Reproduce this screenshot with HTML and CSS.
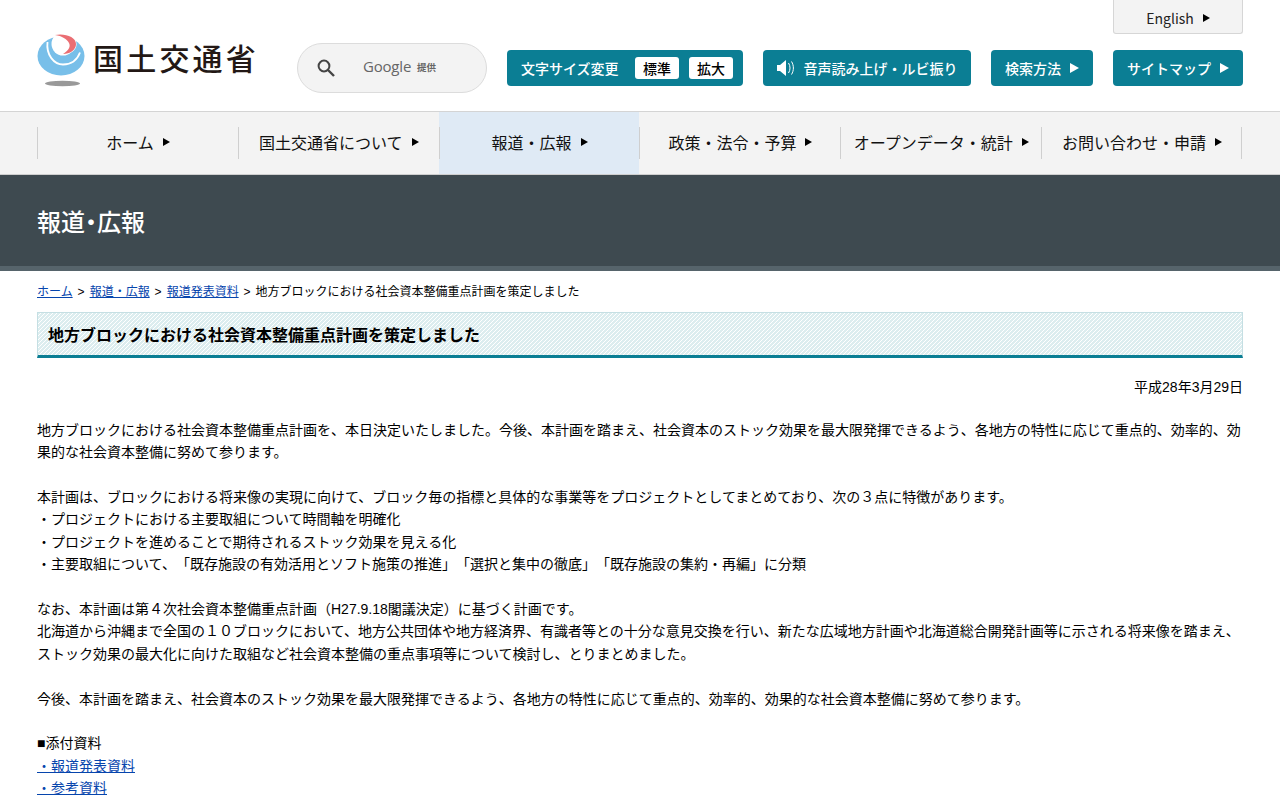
FILE: index.html
```html
<!DOCTYPE html>
<html lang="ja">
<head>
<meta charset="utf-8">
<title>地方ブロックにおける社会資本整備重点計画を策定しました</title>
<link rel="stylesheet" href="styles.css">
</head>
<body>
<header class="header">
  <a class="logo" href="#">
    <svg class="logo-mark" width="48" height="53" viewBox="0 0 48 53">
      <ellipse cx="25.500" cy="49.500" rx="17.500" ry="2.800" fill="#999"/>
      <ellipse cx="24" cy="22" rx="23.500" ry="19.500" fill="#78bfe9"/>
      <ellipse cx="26" cy="10" rx="11.500" ry="11.500" fill="#fff"/>
      <path d="M10.500 8C9 21 17 30.500 26 30.500c8 0 14-4 17-12" fill="none" stroke="#fff" stroke-width="1.800"/>
      <path d="M18 1C28-1 39 3 39 10c0 6-6 10-13 10 5-3 8-7 6-11-2-4-7-7-14-8z" fill="#ea6e73" stroke="#fff" stroke-width="1.200" paint-order="stroke"/>
    </svg>
    <span class="logo-text">国土交通省</span>
  </a>
  <div class="search">
    <svg class="search-icon" width="18" height="18" viewBox="0 0 18 18"><circle cx="7" cy="7" r="5.400" fill="none" stroke="#444" stroke-width="2"/><path d="M11 11l6 6" stroke="#444" stroke-width="2.400"/></svg>
    <span class="google">Google</span><span class="provided">提供</span>
  </div>
  <div class="tools">
    <a class="english" href="#">English<i class="tri tri-small"></i></a>
    <div class="tool-row">
      <div class="btn btn-size"><span class="size-label">文字サイズ変更</span><span class="chip">標準</span><span class="chip">拡大</span></div>
      <a class="btn btn-voice" href="#">
        <svg class="speaker" width="18" height="16" viewBox="0 0 18 16"><path d="M0 5h3l6-5v16l-6-5H0z" fill="#fff"/><path d="M11.500 3c2 3 2 7 0 10M14.500 1.500c2.500 4 2.500 9 0 13" fill="none" stroke="#fff" stroke-width="1"/></svg>
        音声読み上げ・ルビ振り</a>
      <a class="btn btn-how" href="#">検索方法<i class="tri tri-white"></i></a>
      <a class="btn btn-map" href="#">サイトマップ<i class="tri tri-white"></i></a>
    </div>
  </div>
</header>
<nav class="nav">
  <a class="nav-item" href="#">ホーム<i class="tri tri-small"></i></a>
  <a class="nav-item" href="#">国土交通省について<i class="tri tri-small"></i></a>
  <a class="nav-item nav-active" href="#">報道・広報<i class="tri tri-small"></i></a>
  <a class="nav-item" href="#">政策・法令・予算<i class="tri tri-small"></i></a>
  <a class="nav-item" href="#">オープンデータ・統計<i class="tri tri-small"></i></a>
  <a class="nav-item" href="#">お問い合わせ・申請<i class="tri tri-small"></i></a>
</nav>
<div class="banner"><p class="banner-title">報道<span class="banner-dot">・</span>広報</p></div>
<main class="main">
  <div class="crumbs"><a href="#">ホーム</a> &gt; <a href="#">報道・広報</a> &gt; <a href="#">報道発表資料</a> &gt; 地方ブロックにおける社会資本整備重点計画を策定しました</div>
  <h1 class="title">地方ブロックにおける社会資本整備重点計画を策定しました</h1>
  <p class="date">平成28年3月29日</p>
  <p class="body">地方ブロックにおける社会資本整備重点計画を、本日決定いたしました。今後、本計画を踏まえ、社会資本のストック効果を最大限発揮できるよう、各地方の特性に応じて重点的、効率的、効果的な社会資本整備に努めて参ります。<br>
<br>
本計画は、ブロックにおける将来像の実現に向けて、ブロック毎の指標と具体的な事業等をプロジェクトとしてまとめており、次の３点に特徴があります。<br>
・プロジェクトにおける主要取組について時間軸を明確化<br>
・プロジェクトを進めることで期待されるストック効果を見える化<br>
・主要取組について、「既存施設の有効活用とソフト施策の推進」「選択と集中の徹底」「既存施設の集約・再編」に分類<br>
<br>
なお、本計画は第４次社会資本整備重点計画（H27.9.18閣議決定）に基づく計画です。<br>
北海道から沖縄まで全国の１０ブロックにおいて、地方公共団体や地方経済界、有識者等との十分な意見交換を行い、新たな広域地方計画や北海道総合開発計画等に示される将来像を踏まえ、ストック効果の最大化に向けた取組など社会資本整備の重点事項等について検討し、とりまとめました。<br>
<br>
今後、本計画を踏まえ、社会資本のストック効果を最大限発揮できるよう、各地方の特性に応じて重点的、効率的、効果的な社会資本整備に努めて参ります。<br>
<br>
■添付資料<br>
<a href="#">・報道発表資料</a><br>
<a href="#">・参考資料</a></p>
</main>
</body>
</html>
```
FILE: styles.css
```css
* { box-sizing: border-box; }
html, body { margin: 0; padding: 0; }
body {
  font-family: "Liberation Sans", "Noto Sans CJK JP", sans-serif;
  font-size: 14px;
  line-height: 22.4px;
  color: #000;
  background: #fff;
  text-spacing-trim: space-all;
}
a { color: inherit; text-decoration: none; }
p { margin: 0; }

.header { display: flex; height: 111px; padding: 0 37px; }
.logo { display: flex; align-items: flex-start; margin-top: 34px; width: 260px; }
.logo-mark { flex: none; }
.logo-text {
  margin: 0 0 0 8px;
  font-family: "Noto Sans CJK JP", sans-serif;
  font-size: 30px;
  line-height: 46px;
  font-weight: 500;
  color: #231815;
  letter-spacing: 3.200px;
  white-space: nowrap;
}
.search {
  display: flex;
  align-items: center;
  width: 190px;
  height: 50px;
  margin-top: 43px;
  padding-left: 19px;
  background: #f3f3f3;
  border: 1px solid #dcdcdc;
  border-radius: 25px;
}
.search-icon { flex: none; }
.google { margin: -3px 0 0 28px; font-family: "Open Sans", sans-serif; font-size: 15px; color: #666; letter-spacing: -.2px; }
.provided { margin: -1px 0 0 6px; font-size: 9.500px; font-weight: 700; color: #666; font-family: "Noto Sans CJK JP", sans-serif; }

.tools { margin-left: auto; display: flex; flex-direction: column; align-items: flex-end; }
.english {
  display: flex;
  align-items: center;
  justify-content: center;
  width: 130px;
  height: 34px;
  padding-top: 3px;
  background: #f3f3f3;
  border: 1px solid #d6d6d6;
  border-top: 0;
  border-radius: 0 0 3px 3px;
  font-family: "Noto Sans CJK JP", sans-serif;
  font-size: 14px;
  color: #222;
}
.tool-row { display: flex; gap: 20px; margin-top: 16px; }
.btn {
  display: flex;
  align-items: center;
  justify-content: center;
  height: 36px;
  background: #0b7e94;
  border-radius: 4px;
  color: #fff;
  font-family: "Noto Sans CJK JP", sans-serif;
  font-size: 14px;
  font-weight: 500;
  white-space: nowrap;
}
.btn-size { width: 236px; justify-content: flex-start; padding-left: 14px; }
.size-label { width: 114px; }
.chip {
  display: block;
  width: 44px;
  height: 22px;
  margin-right: 10px;
  line-height: 22px;
  text-align: center;
  background: #fff;
  color: #000;
  border-radius: 3px;
}
.chip + .chip { margin-right: 0; }
.btn-voice { width: 208px; }
.speaker { margin-right: 9px; }
.btn-how { width: 102px; }
.btn-map { width: 130px; }

.tri {
  display: inline-block;
  width: 0;
  height: 0;
  border-style: solid;
  border-color: transparent transparent transparent #000;
}
.tri-small { margin-left: 9px; border-width: 4px 0 4px 7px; }
.tri-white { margin-left: 9px; border-width: 5px 0 5px 9px; border-left-color: #fff; }

.nav {
  display: flex;
  height: 64px;
  padding: 0 38px 0 37px;
  background: #f3f3f3;
  border-top: 1px solid #d4d4d4;
  border-bottom: 1px solid #cfcfcf;
}
.nav-item {
  position: relative;
  flex: 1;
  display: flex;
  align-items: center;
  justify-content: center;
  padding: 0 0 2px 1px;
  font-family: "Noto Sans CJK JP", sans-serif;
  font-size: 16px;
  color: #111;
  white-space: nowrap;
}
.nav-item::before {
  content: "";
  position: absolute;
  left: 0;
  top: 15px;
  height: 32px;
  border-left: 1px solid #cfcfcf;
}
.nav-item:last-child::after {
  content: "";
  position: absolute;
  right: 0;
  top: 15px;
  height: 32px;
  border-left: 1px solid #cfcfcf;
}
.nav-active { background: #dfeaf5; }

.banner {
  height: 96px;
  padding: 25px 37px 0;
  background: #3e4a50;
  border-bottom: 5px solid #56646b;
}
.banner-title {
  font-family: "Noto Sans CJK JP", sans-serif;
  font-size: 24px;
  line-height: 42px;
  color: #fff;
  font-weight: 500;
}
.banner-dot { font-feature-settings: "palt"; }

.main { padding: 0 37px; }
.crumbs {
  padding-top: 10px;
  font-size: 12px;
  line-height: 22px;
  word-spacing: 1.650px;
  color: #000;
}
.crumbs a, .body a { color: #0645ad; text-decoration: underline; }
.title {
  margin: 9px 0 0;
  height: 46px;
  padding: 2px 10px 0;
  border: 1px solid #c5dfe3;
  border-bottom: 3px solid #0b7e94;
  background: repeating-linear-gradient(135deg, #dcedef 0 2.120px, #fff 2.120px 2.828px);
  font-size: 16px;
  line-height: 42px;
  font-weight: 700;
}
.date { margin-top: 18px; text-align: right; }
.body { margin-top: 20.400px; }
```
